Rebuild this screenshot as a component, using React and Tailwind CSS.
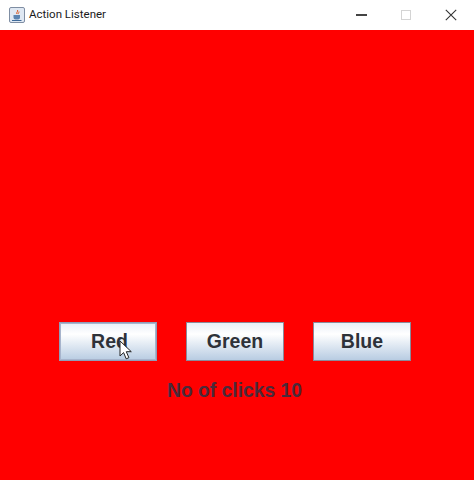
export default function App() {
  const btn = "w-[98px] h-[39px] border border-[#8a8a9a] bg-gradient-to-b from-[#e9eff8] via-[#ffffff] via-[30%] to-[#b8cce2] text-[19.5px] font-bold text-[#2e3239] flex items-center justify-center";
  return (
    <div className="w-[474px] h-[480px] flex flex-col overflow-hidden bg-[#ff0000] font-['Liberation_Sans',Arial,sans-serif]">
      <div className="h-[30px] bg-white flex items-center shrink-0 pl-[9px]">
        <svg width="16" height="16" viewBox="0 0 16 16" className="shrink-0">
          <rect x="0.5" y="0.5" width="15" height="15" rx="1.5" fill="#dfe8f3" stroke="#7f8ea3" />
          <path d="M8.5 3c1 1.4-1.5 2.2-.6 4M10 4.5c.4 1-1.2 1.4-.7 2.6" stroke="#d9541e" strokeWidth="1" fill="none" />
          <path d="M4.5 8h6.5v2.5c0 1.2-1 2-2 2H6.5c-1 0-2-.8-2-2z" fill="#5b84b1" />
          <path d="M3 13.5h9.5" stroke="#3f6a99" strokeWidth="1" />
        </svg>
        <span className="ml-[4px] text-[11.5px] text-[#1a1a1a] font-['Roboto',sans-serif]">Action Listener</span>
        <div className="ml-auto mr-[1px] flex items-center">
          <div className="w-[44.5px] h-[30px] flex items-center justify-center">
            <div className="w-[11px] h-[1.5px] bg-[#444444]" />
          </div>
          <div className="w-[44.5px] h-[30px] flex items-center justify-center">
            <div className="w-[10px] h-[10px] border border-[#d4d4d4]" />
          </div>
          <div className="w-[44.5px] h-[30px] flex items-center justify-center">
            <svg width="12" height="12" viewBox="0 0 12 12">
              <path d="M.8.8l10.4 10.4M11.2.8L.8 11.2" stroke="#333333" strokeWidth="1.1" fill="none" />
            </svg>
          </div>
        </div>
      </div>
      <div className="flex-1 flex flex-col pt-[292px]">
        <div className="flex gap-[29px] pl-[59px]">
          <div className="relative">
            <div className={btn + " pl-[3px] border-[#8f9db8] outline outline-1 outline-[#a7b4cc] outline-offset-[-2px]"}>Red</div>
            <svg width="14" height="21" viewBox="0 0 14 21" className="absolute left-[60px] top-[18px]">
              <path d="M1 1v15l3.6-3.4 2.6 6.2 2.7-1.1-2.6-6h5z" fill="#ffffff" stroke="#222222" strokeWidth="1" strokeLinejoin="round" />
            </svg>
          </div>
          <div className={btn}>Green</div>
          <div className={btn}>Blue</div>
        </div>
        <div className="mt-[18px] text-center text-[19.3px] leading-[23px] font-bold text-[#4a2a3a] pr-[5px]">No of clicks 10</div>
      </div>
    </div>
  );
}
